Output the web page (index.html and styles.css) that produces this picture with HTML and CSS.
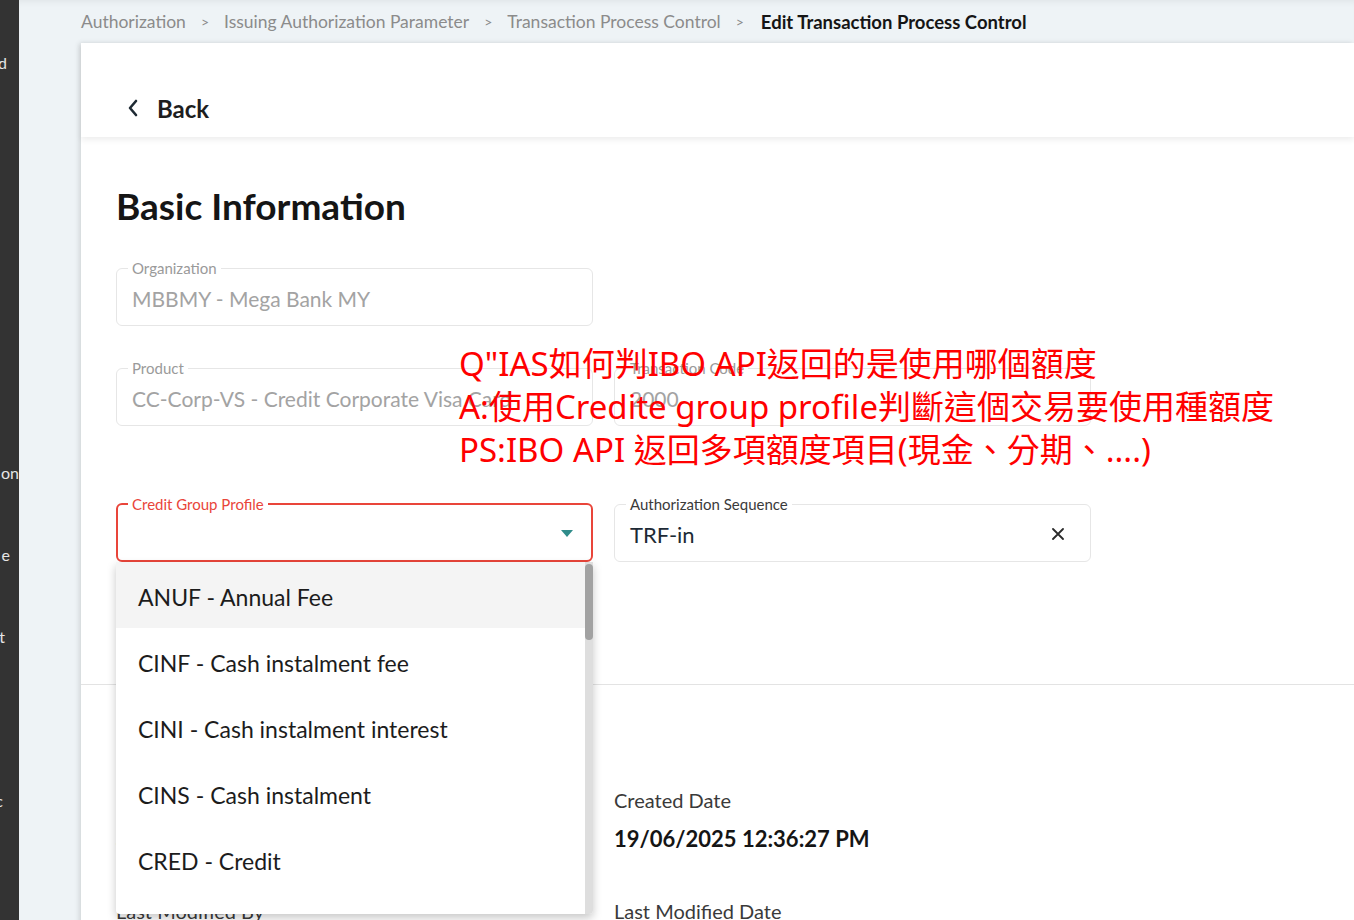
FILE: index.html
```html
<!DOCTYPE html>
<html lang="en">
<head>
<meta charset="utf-8">
<title>Edit Transaction Process Control</title>
<link rel="stylesheet" href="styles.css">
</head>
<body>
<div class="app">
  <aside class="sidebar">
    <div class="side-item s1">d</div>
    <div class="side-item"></div>
    <div class="side-item"></div>
    <div class="side-item"></div>
    <div class="side-item"></div>
    <div class="side-item s2">on</div>
    <div class="side-item s3">e</div>
    <div class="side-item s4">t</div>
    <div class="side-item"></div>
    <div class="side-item s5">c</div>
  </aside>
  <main class="main">
    <nav class="crumbs">
      <span class="crumb">Authorization</span>
      <span class="sep">&gt;</span>
      <span class="crumb">Issuing Authorization Parameter</span>
      <span class="sep">&gt;</span>
      <span class="crumb">Transaction Process Control</span>
      <span class="sep">&gt;</span>
      <span class="crumb current">Edit Transaction Process Control</span>
    </nav>
    <section class="card">
      <header class="card-head">
        <svg class="back-icon" width="12" height="18" viewBox="0 0 12 18"><path d="M9 2 L3 9 L9 16" fill="none" stroke="#1e2a33" stroke-width="2.6" stroke-linecap="round" stroke-linejoin="round"/></svg>
        <span class="back-text">Back</span>
      </header>
      <div class="card-body">
        <h1 class="title">Basic Information</h1>
        <div class="row row-org">
          <fieldset class="field disabled">
            <legend>Organization</legend>
            <div class="value">MBBMY - Mega Bank MY</div>
          </fieldset>
        </div>
        <div class="row row-product">
          <fieldset class="field disabled">
            <legend>Product</legend>
            <div class="value">CC-Corp-VS - Credit Corporate Visa Card</div>
          </fieldset>
          <fieldset class="field disabled">
            <legend>Transaction Code</legend>
            <div class="value">2000</div>
          </fieldset>
        </div>
        <div class="row row-credit">
          <div class="select">
            <fieldset class="field error">
              <legend>Credit Group Profile</legend>
              <div class="value">
                <span class="grow"></span>
                <svg class="caret" width="12" height="7" viewBox="0 0 12 7"><path d="M0 0 H12 L6 7 Z" fill="#2f8c8a"/></svg>
              </div>
            </fieldset>
            <div class="menu">
              <ul class="options">
                <li class="opt active">ANUF - Annual Fee</li>
                <li class="opt">CINF - Cash instalment fee</li>
                <li class="opt">CINI - Cash instalment interest</li>
                <li class="opt">CINS - Cash instalment</li>
                <li class="opt">CRED - Credit</li>
              </ul>
              <div class="track"><div class="thumb"></div></div>
            </div>
          </div>
          <fieldset class="field active-field">
            <legend>Authorization Sequence</legend>
            <div class="value">
              <span class="grow">TRF-in</span>
              <svg class="clear" width="12" height="12" viewBox="0 0 12 12"><path d="M1 1 L11 11 M11 1 L1 11" stroke="#2a2a2a" stroke-width="1.8" stroke-linecap="round"/></svg>
            </div>
          </fieldset>
        </div>
        <hr class="divider">
        <div class="row meta">
          <div class="meta-item">
            <div class="meta-label">Created By</div>
            <div class="meta-value">admin</div>
          </div>
          <div class="meta-item">
            <div class="meta-label">Created Date</div>
            <div class="meta-value">19/06/2025 12:36:27 PM</div>
          </div>
        </div>
        <div class="row meta meta2">
          <div class="meta-item">
            <div class="meta-label">Last Modified By</div>
          </div>
          <div class="meta-item">
            <div class="meta-label">Last Modified Date</div>
          </div>
        </div>
      </div>
    </section>
  </main>
  <div class="note">
    <div>Q"IAS如何判IBO API返回的是使用哪個額度</div>
    <div>A:使用Credite group profile判斷這個交易要使用種額度</div>
    <div>PS:IBO API 返回多項額度項目(現金、分期、....)</div>
  </div>
</div>
</body>
</html>
```

FILE: styles.css
```css
* { box-sizing: border-box; }
html, body { margin: 0; padding: 0; }
body {
  width: 1354px;
  height: 920px;
  overflow: hidden;
  font-family: "Lato", "Noto Sans", sans-serif;
  background: #eef3f6;
  color: #1c1c1c;
}
.app {
  position: relative;
  display: flex;
  height: 920px;
}
.sidebar {
  width: 19px;
  flex: none;
  background: #333333;
  overflow: hidden;
  padding-top: 21px;
}
.side-item {
  height: 82px;
  display: flex;
  align-items: center;
  justify-content: flex-end;
  white-space: nowrap;
  color: #e6e6e6;
  font-size: 16px;
}
.s1 { padding-right: 12px; }
.s2 { padding-right: 0; }
.s3 { padding-right: 9px; }
.s4 { padding-right: 14px; }
.s5 { padding-right: 16px; }
.main {
  flex: 1;
  min-width: 0;
  display: flex;
  flex-direction: column;
  overflow: hidden;
}
.crumbs {
  height: 43px;
  flex: none;
  display: flex;
  align-items: center;
  gap: 15px;
  padding-left: 62px;
  font-size: 17.5px;
  color: #8b8b8b;
  box-shadow: inset 0 6px 6px -4px rgba(0,0,0,0.06);
  white-space: nowrap;
}
.sep { font-size: 14px; color: #8b8b8b; }
.current { color: #151515; font-weight: 700; font-size: 18.5px; margin-left: 2px; }
.card {
  margin-left: 62px;
  flex: 1;
  background: #fff;
  box-shadow: -2px 0 5px rgba(0,0,0,0.12);
  display: flex;
  flex-direction: column;
}
.card-head {
  height: 94px;
  flex: none;
  display: flex;
  align-items: center;
  padding-left: 46px;
  padding-top: 36px;
  gap: 18px;
  box-shadow: 0 3px 6px rgba(0,0,0,0.07);
  position: relative;
  z-index: 1;
}
.back-text {
  font-size: 24px;
  font-weight: 700;
  color: #1e1e1e;
}
.card-body {
  padding: 0 0 0 35px;
}
.title {
  margin: 47px 0 0 0;
  font-size: 37px;
  line-height: 44px;
  font-weight: 700;
  color: #151515;
}
.row {
  display: flex;
  gap: 21px;
}
.row-org { margin-top: 31px; }
.row-product { margin-top: 33px; }
.row-credit { margin-top: 69px; }
.field {
  width: 477px;
  margin: 0;
  padding: 0 16px 0 16px;
  border: 1px solid #e6e6e6;
  border-radius: 6px;
  min-width: 0;
}
.field legend {
  font-size: 15px;
  line-height: 18px;
  padding: 0 4px;
  margin-left: -5px;
  color: #9a9a9a;
}
.value {
  height: 48px;
  padding-bottom: 6px;
  display: flex;
  align-items: center;
  font-size: 21px;
  white-space: nowrap;
  margin-left: -1px;
}
.disabled .value { color: #a3a3a3; }
.grow { flex: 1; }
.field.error {
  border: 2px solid #e9453a;
  padding: 0 15px;
}
.field.error legend { color: #e9453a; }
.field.error .value { height: 47px; }
.caret { margin-right: 3px; }
.active-field legend { color: #3a3a3a; }
.active-field .value { color: #1d2a35; font-size: 22px; }
.clear { margin-right: 10px; }
.select {
  position: relative;
  width: 477px;
}
.menu {
  position: absolute;
  left: 0;
  top: 100%;
  width: 477px;
  height: 352px;
  background: #fff;
  border-radius: 0 0 4px 4px;
  box-shadow: 0 4px 10px rgba(0,0,0,0.22);
  display: flex;
  z-index: 5;
}
.options {
  list-style: none;
  margin: 0;
  padding: 0;
  flex: 1;
}
.opt {
  height: 66px;
  display: flex;
  align-items: center;
  padding-left: 22px;
  padding-top: 4px;
  font-size: 23px;
  color: #1c1c1c;
}
.opt.active { background: #f4f4f4; }
.track {
  width: 8px;
  background: #dedede;
  border-radius: 0 0 4px 0;
  padding-top: 2px;
}
.thumb {
  height: 76px;
  background: #a2a2a2;
  border-radius: 4px;
}
.divider {
  margin: 122px 0 0 -35px;
  border: 0;
  border-top: 1px solid #e3e3e3;
}
.meta { margin-top: 101px; }
.meta-item { width: 477px; }
.meta-label {
  font-size: 20px;
  line-height: 28px;
  color: #3a3a3a;
}
.meta-value {
  margin-top: 10px;
  font-size: 22px;
  line-height: 30px;
  font-weight: 700;
  color: #151515;
}
.meta2 { margin-top: 43px; }
.note {
  position: absolute;
  left: 459px;
  top: 342px;
  z-index: 10;
  color: #ff0000;
  font-family: "Noto Sans", "Noto Sans CJK TC", sans-serif;
  font-size: 33px;
  line-height: 43px;
  white-space: nowrap;
}
```
